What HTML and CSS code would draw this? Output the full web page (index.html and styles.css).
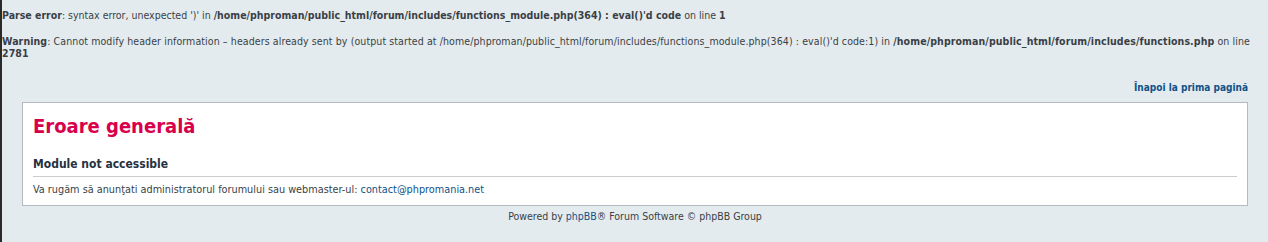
FILE: index.html
```html
<!DOCTYPE html>
<html lang="ro">
<head>
  <meta charset="UTF-8" />
  <title>phpBB - Eroare generală</title>
  <link rel="stylesheet" href="styles.css">
</head>
<body>

  <div class="php-errors">
    <p><b>Parse error</b>: syntax error, unexpected ')' in <b>/home/phproman/public_html/forum/includes/functions_module.php(364) : eval()'d code</b> on line <b>1</b></p>
    <p class="warning"><b>Warning</b>: Cannot modify header information – headers already sent by (output started at /home/phproman/public_html/forum/includes/functions_module.php(364) : eval()'d code:1) in <b>/home/phproman/public_html/forum/includes/functions.php</b> on line <b>2781</b></p>
  </div>

  <div class="wrap">
    <div class="backlink"><a href="#">Înapoi la prima pagină</a></div>

    <div class="panel">
      <h2>Eroare generală</h2>
      <h3>Module not accessible</h3>
      <p class="msg">Va rugăm să anunţati administratorul forumului sau webmaster-ul: <a href="#">contact@phpromania.net</a></p>
    </div>

    <div class="copyright">Powered by <a href="#">phpBB</a>® Forum Software © phpBB Group</div>
  </div>

</body>
</html>
```

FILE: styles.css
```css
html {
  background: #e4ebee;
}
body {
  margin: 0;
  border-left: 2px solid #2a2a2a;
  min-height: 242px;
  box-sizing: border-box;
  font-family: "DejaVu Sans Condensed", "DejaVu Sans", Verdana, sans-serif;
  font-size: 10.5px;
  color: #3a3f46;
}
a {
  color: #105289;
  text-decoration: none;
}
.php-errors {
  padding: 9px 4px 0 0;
  line-height: 12px;
}
.php-errors p {
  margin: 0 0 14px 0;
}
.php-errors .warning {
  letter-spacing: 0.1px;
}
.wrap {
  padding: 0 20px 0 20px;
}
.backlink {
  text-align: right;
  font-weight: bold;
  font-size: 10px;
  padding: 9px 0 8px 0;
  line-height: 12px;
}
.panel {
  background: #fff;
  border: 1px solid #b4bac0;
  padding: 10px 10px 8px 10px;
}
.panel h2 {
  color: #d8004c;
  font-size: 20px;
  font-weight: bold;
  margin: 1px 0 18px 0;
  line-height: 24px;
}
.panel h3 {
  font-size: 12px;
  font-weight: bold;
  color: #28313f;
  margin: 0;
  padding-bottom: 4px;
  border-bottom: 1px solid #ccc;
  line-height: 16px;
}
.msg {
  font-size: 10.8px;
  margin: 6px 0 0 0;
  line-height: 14px;
}
.copyright {
  text-align: center;
  padding: 3px 0;
  line-height: 14px;
}
```
